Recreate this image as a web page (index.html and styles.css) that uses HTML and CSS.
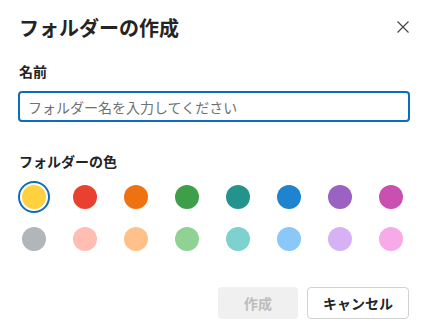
FILE: index.html
```html
<!DOCTYPE html>
<html lang="ja">
<head>
    <meta charset="UTF-8">
    <meta name="viewport" content="width=device-width, initial-scale=1.0">
    <title>フォルダーの作成</title>
    <link rel="stylesheet" href="styles.css">
</head>
<body>
    <div class="dialog">
        <div class="dialog-header">
            <h1 class="dialog-title">フォルダーの作成</h1>
            <button class="close-button" aria-label="閉じる">
                <svg width="12" height="12" viewBox="0 0 12 12">
                    <path d="M0.5 0.5 L11.5 11.5 M11.5 0.5 L0.5 11.5" stroke="#424242" stroke-width="1.1" fill="none"/>
                </svg>
            </button>
        </div>

        <label class="field-label" for="folderName">名前</label>
        <input type="text" id="folderName" class="name-input" placeholder="フォルダー名を入力してください">

        <div class="field-label color-label">フォルダーの色</div>
        <div class="color-grid" id="colors"></div>

        <div class="dialog-actions">
            <button class="btn btn-disabled" disabled>作成</button>
            <button class="btn btn-secondary">キャンセル</button>
        </div>
    </div>

    <script>
        let colors = [
            "#ffd13f", "#e8412f", "#ef7212", "#3e9f4b", "#25938d", "#1e84d0", "#9b62c3", "#c94fb0",
            "#b0b6b9", "#ffbdb4", "#ffc089", "#8fd294", "#7dd1ce", "#89c8f8", "#d6b2f4", "#f6aae7"
        ];
        let selected = 0;

        function createColors() {
            let container = document.getElementById("colors");
            colors.forEach((c, index) => {
                let cell = document.createElement("div");
                cell.classList.add("color-cell");
                if (index === selected) cell.classList.add("selected");
                let dot = document.createElement("span");
                dot.classList.add("color-dot");
                dot.style.background = c;
                cell.appendChild(dot);
                container.appendChild(cell);
            });
        }

        createColors();
    </script>
</body>
</html>
```

FILE: styles.css
```css
body {
    margin: 0;
    background: #ffffff;
    font-family: "Noto Sans CJK JP", "Noto Sans", sans-serif;
    color: #242424;
}
.dialog {
    padding: 14px 16px 0 18px;
}
.dialog-header {
    display: flex;
    align-items: center;
    justify-content: space-between;
    height: 28px;
}
.dialog-title {
    margin: 0 0 0 1px;
    font-size: 20px;
    line-height: 28px;
    font-weight: 700;
}
.close-button {
    width: 20px;
    height: 20px;
    margin: -2px -3px 0 0;
    padding: 0;
    border: none;
    background: none;
    display: flex;
    align-items: center;
    justify-content: center;
    cursor: pointer;
}
.field-label {
    display: block;
    margin: 19px 0 0 1px;
    font-size: 14px;
    line-height: 20px;
    font-weight: 700;
}
.color-label {
    margin-top: 29px;
}
.name-input {
    display: block;
    box-sizing: border-box;
    width: 100%;
    height: 31px;
    margin-top: 10px;
    padding: 0 8px;
    border: 2px solid #0f6cbd;
    border-radius: 4px;
    font-family: inherit;
    font-size: 14px;
    outline: none;
}
.name-input::placeholder {
    color: #707070;
}
.color-grid {
    display: grid;
    grid-template-columns: repeat(8, 32px);
    column-gap: 19px;
    row-gap: 10px;
    margin-top: 10px;
}
.color-cell {
    box-sizing: border-box;
    width: 32px;
    height: 32px;
    border-radius: 50%;
    display: flex;
    align-items: center;
    justify-content: center;
}
.color-cell.selected {
    border: 2px solid #0f6cbd;
}
.color-dot {
    width: 24px;
    height: 24px;
    border-radius: 50%;
}
.dialog-actions {
    display: flex;
    justify-content: flex-end;
    gap: 9px;
    margin-top: 32px;
    padding-right: 1px;
}
.btn {
    box-sizing: border-box;
    height: 32px;
    border-radius: 4px;
    font-family: inherit;
    font-size: 14px;
    font-weight: 700;
}
.btn-disabled {
    width: 80px;
    border: none;
    background: #f0f0f0;
    color: #bdbdbd;
}
.btn-secondary {
    width: 102px;
    border: 1px solid #d1d1d1;
    background: #ffffff;
    color: #242424;
    cursor: pointer;
}
```
